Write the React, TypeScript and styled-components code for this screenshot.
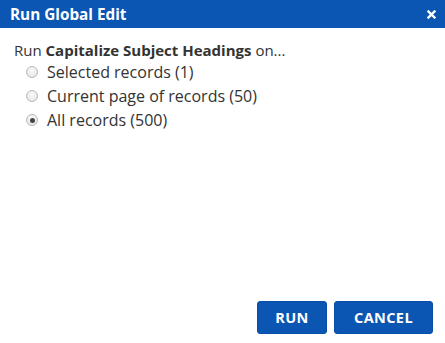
import React, { useState } from 'react'
import styled, { createGlobalStyle } from 'styled-components'

const GlobalStyle = createGlobalStyle`
  html, body {
    margin: 0;
    padding: 0;
    background: #ffffff;
  }
  body {
    font-family: "Open Sans", "Liberation Sans", sans-serif;
  }
`

const Dialog = styled.div`
  width: 445px;
  height: 343px;
  display: flex;
  flex-direction: column;
  background: #ffffff;
  box-sizing: border-box;
`

const Header = styled.div`
  height: 28px;
  background: #0b56b3;
  display: flex;
  align-items: center;
  justify-content: space-between;
  padding: 0 9px 0 10px;
  box-sizing: border-box;
`

const Title = styled.h1`
  margin: 0;
  font-size: 15.3px;
  font-weight: 700;
  color: #ffffff;
`

const CloseButton = styled.button`
  border: none;
  background: transparent;
  padding: 0;
  width: 10px;
  height: 10px;
  display: flex;
  align-items: center;
  justify-content: center;
  cursor: pointer;
`

const Body = styled.div`
  flex: 1;
  padding: 12px 14px 0 14px;
`

const Prompt = styled.p`
  margin: 0;
  font-size: 15px;
  color: #333333;
  line-height: 20px;

  strong {
    font-weight: 700;
  }
`

const Options = styled.div`
  display: flex;
  flex-direction: column;
  padding-left: 12px;
`

const OptionRow = styled.label`
  display: flex;
  align-items: center;
  gap: 9px;
  height: 24px;
  font-size: 16px;
  color: #333333;
  cursor: pointer;
`

const RadioInput = styled.input`
  appearance: none;
  margin: 0;
  width: 12px;
  height: 12px;
  border-radius: 50%;
  border: 1px solid #b9b9b9;
  background: radial-gradient(circle at 50% 35%, #fafafa 0%, #e2e2e2 100%);
  box-sizing: border-box;
  position: relative;

  &:checked::after {
    content: '';
    position: absolute;
    left: 2.5px;
    top: 2.5px;
    width: 5px;
    height: 5px;
    border-radius: 50%;
    background: #444444;
  }
`

const Footer = styled.div`
  display: flex;
  justify-content: flex-end;
  gap: 7px;
  padding: 0 12px 9px 0;
`

const Button = styled.button<{ $width: number }>`
  width: ${p => p.$width}px;
  height: 33px;
  border: 1px solid #0a4fa6;
  border-radius: 3px;
  background: #0b56b3;
  color: #ffffff;
  font-family: "Open Sans", "Liberation Sans", sans-serif;
  font-size: 14.5px;
  font-weight: 700;
  letter-spacing: 0.4px;
  cursor: pointer;
`

const options = [
  { id: 'selected', label: 'Selected records (1)' },
  { id: 'page', label: 'Current page of records (50)' },
  { id: 'all', label: 'All records (500)' },
]

export default function App() {
  const [choice, setChoice] = useState('all')
  return (
    <>
      <GlobalStyle />
      <Dialog>
        <Header>
          <Title>Run Global Edit</Title>
          <CloseButton aria-label="Close">
            <svg width="9" height="9" viewBox="0 0 9 9">
              <path d="M1.5 1.5 L7.5 7.5 M7.5 1.5 L1.5 7.5" stroke="#ffffff" strokeWidth="2.4" strokeLinecap="square" />
            </svg>
          </CloseButton>
        </Header>
        <Body>
          <Prompt>
            Run <strong>Capitalize Subject Headings</strong> on...
          </Prompt>
          <Options>
            {options.map(o => (
              <OptionRow key={o.id}>
                <RadioInput
                  type="radio"
                  name="scope"
                  checked={choice === o.id}
                  onChange={() => setChoice(o.id)}
                />
                {o.label}
              </OptionRow>
            ))}
          </Options>
        </Body>
        <Footer>
          <Button $width={70}>RUN</Button>
          <Button $width={99}>CANCEL</Button>
        </Footer>
      </Dialog>
    </>
  )
}
